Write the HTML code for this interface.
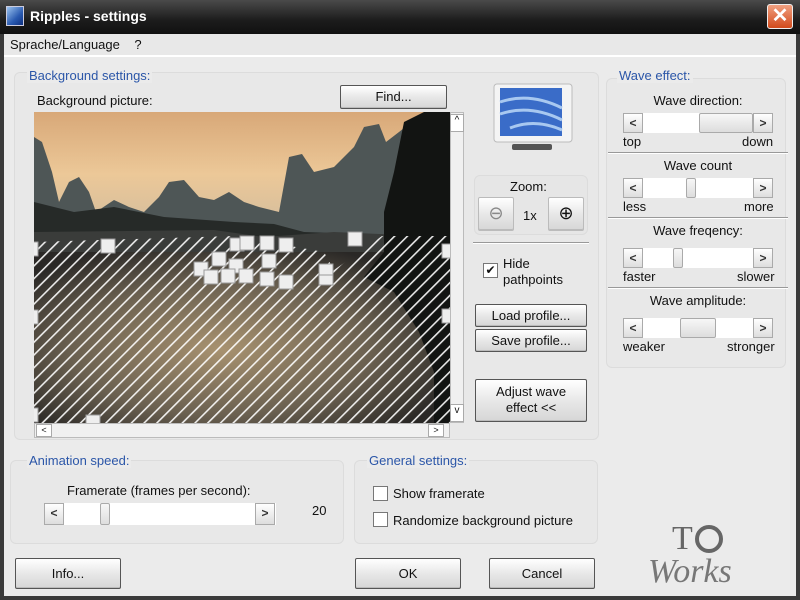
<!DOCTYPE html>
<html><head><meta charset="utf-8"><style>
*{box-sizing:border-box;margin:0;padding:0}
body{width:800px;height:600px;overflow:hidden;background:#3a3a3a;font-family:"Liberation Sans",sans-serif;font-size:13px;color:#111;position:relative}
.a{position:absolute}
.title{left:0;top:0;width:800px;height:34px;background:linear-gradient(#4a4a4a,#1c1c1c 60%,#111)}
.body{left:4px;top:34px;width:792px;height:562px;background:#ebebeb}
.grp{position:absolute;border:1px solid #dcdcdc;border-radius:6px;background:#e8e8e8}
.lbl{position:absolute;color:#2b56a8;font-size:13px;background:#ebebeb;padding:0 2px}
.btn{position:absolute;border:1px solid #555;border-radius:2px;background:linear-gradient(#fff,#e8e8e8 50%,#d6d6d6);text-align:center;font-size:13px;box-shadow:inset 0 -1px 0 #bbb}
.sb{position:absolute;background:#fff;height:20px}
.arr{position:absolute;width:20px;height:20px;border:1px solid #aaa;background:linear-gradient(#fff,#ddd);font-size:12px;text-align:center;line-height:18px;color:#333;font-weight:bold}
.th{position:absolute;top:0;height:20px;border:1px solid #aaa;background:linear-gradient(#f7f7f7,#ddd);border-radius:2px}
.cb{position:absolute;width:15px;height:15px;border:1px solid #777;background:#fff}
.sep{position:absolute;height:2px;border-top:1px solid #999;border-bottom:1px solid #fff}
</style></head><body>
<div class="a title"></div>
<div class="a" style="left:6px;top:6px;width:18px;height:20px;background:linear-gradient(135deg,#9cc4f0,#2a5ab0 60%,#0d2f80);border:1px solid #ccd"></div>
<div class="a" style="left:30px;top:8px;color:#fff;font-weight:bold;font-size:14px">Ripples - settings</div>
<div class="a" style="left:767px;top:4px;width:26px;height:25px;background:linear-gradient(#f0a080,#d24a1c);border:1px solid #eee;border-radius:3px;color:#fff;font-size:20px;text-align:center;line-height:23px;font-weight:bold">✕</div>
<div class="a body"></div>
<div class="a" style="left:4px;top:34px;width:792px;height:23px;background:#e8e8e8;border-bottom:2px solid #fff"></div>
<div class="a" style="left:10px;top:37px">Sprache/Language&nbsp;&nbsp;&nbsp;&nbsp;?</div>

<div class="grp" style="left:14px;top:72px;width:585px;height:368px"></div>
<div class="lbl" style="left:27px;top:68px">Background settings:</div>
<div class="a" style="left:37px;top:93px">Background picture:</div>
<div class="btn" style="left:340px;top:85px;width:107px;height:24px;line-height:22px">Find...</div>

<div class="a" style="left:34px;top:112px;width:416px;height:311px;overflow:hidden">
<svg width="416" height="311" style="position:absolute;left:0;top:0">
<defs>
<linearGradient id="sky" x1="0" y1="0" x2="0" y2="1"><stop offset="0" stop-color="#d8a878"/><stop offset=".2" stop-color="#ecc898"/><stop offset=".45" stop-color="#c8b8a0"/><stop offset=".7" stop-color="#8a8c88"/></linearGradient>
<radialGradient id="wat" cx=".45" cy=".6" r=".6"><stop offset="0" stop-color="#a89270"/><stop offset=".6" stop-color="#6a6050"/><stop offset="1" stop-color="#2a2826"/></radialGradient>
<pattern id="h" width="9" height="9" patternUnits="userSpaceOnUse" patternTransform="rotate(45)"><rect width="1.6" height="9" fill="#fff" opacity=".9"/></pattern>
</defs>
<rect width="416" height="311" fill="url(#sky)"/>
<path d="M0 25 L8 30 L18 60 L25 90 L35 70 L45 65 L55 80 L62 100 L80 88 L95 95 L110 100 L125 85 L135 70 L150 68 L165 85 L180 88 L195 80 L210 90 L225 95 L245 100 L255 45 L268 42 L280 60 L300 55 L320 35 L330 15 L345 12 L352 30 L365 20 L380 8 L416 0 L416 160 L0 160Z" fill="#4e5656"/>
<path d="M0 90 L40 100 L80 95 L130 105 L200 110 L240 112 L270 120 L416 125 L416 130 L0 130Z" fill="#262a28"/>
<rect x="0" y="126" width="416" height="185" fill="url(#wat)"/>
<path d="M0 120 L180 118 L230 125 L300 120 L416 125 L416 140 L0 140Z" fill="#3a3c3a"/>
<path d="M370 10 L390 0 L416 0 L416 311 L400 311 L400 260 L385 220 L360 180 L330 165 L350 140 L350 100 L360 60Z" fill="#121412"/>
<path d="M0 130 L200 124 L290 140 L300 158 L348 124 L416 124 L416 311 L0 311Z" fill="url(#h)"/>
<g fill="#eee" stroke="#999" stroke-width="1">
<rect x="67" y="127" width="14" height="14"/><rect x="314" y="120" width="14" height="14"/>
<rect x="196" y="126" width="14" height="13"/><rect x="206" y="124" width="14" height="14"/><rect x="226" y="124" width="14" height="14"/><rect x="245" y="126" width="14" height="14"/>
<rect x="178" y="140" width="14" height="14"/><rect x="195" y="147" width="14" height="14"/><rect x="160" y="150" width="14" height="14"/><rect x="170" y="158" width="14" height="14"/><rect x="187" y="157" width="14" height="14"/><rect x="205" y="157" width="14" height="14"/><rect x="226" y="160" width="14" height="14"/><rect x="245" y="163" width="14" height="14"/><rect x="228" y="142" width="14" height="14"/><rect x="285" y="152" width="14" height="14"/><rect x="285" y="163" width="14" height="10"/>
<rect x="-6" y="130" width="10" height="14"/><rect x="-6" y="198" width="10" height="14"/><rect x="-6" y="296" width="10" height="14"/><rect x="408" y="132" width="10" height="14"/><rect x="408" y="197" width="10" height="14"/><rect x="52" y="303" width="14" height="12"/>
</g></svg></div>
<div class="a" style="left:450px;top:112px;width:14px;height:311px;background:#f0f0f0;border:1px solid #bbb"></div>
<div class="a" style="left:450px;top:114px;width:14px;height:18px;border:1px solid #aaa;background:#fff;font-size:10px;text-align:center">^</div>
<div class="a" style="left:450px;top:404px;width:14px;height:18px;border:1px solid #aaa;background:#fff;font-size:10px;text-align:center">v</div>
<div class="a" style="left:34px;top:423px;width:416px;height:15px;background:#f0f0f0;border:1px solid #bbb"></div>
<div class="a" style="left:36px;top:424px;width:16px;height:13px;border:1px solid #aaa;background:#fff;font-size:9px;text-align:center">&lt;</div>
<div class="a" style="left:428px;top:424px;width:16px;height:13px;border:1px solid #aaa;background:#fff;font-size:9px;text-align:center">&gt;</div>

<svg class="a" style="left:490px;top:82px" width="86" height="72">
<rect x="4" y="2" width="78" height="58" rx="3" fill="#f4f4f4" stroke="#bbb"/>
<rect x="10" y="6" width="62" height="48" fill="#3a6cc8"/>
<path d="M10 20 Q40 10 72 26 M10 32 Q40 22 72 38 M20 46 Q45 36 72 48" stroke="#a8c8f0" stroke-width="3" fill="none"/>
<rect x="22" y="62" width="40" height="6" rx="2" fill="#555"/></svg>

<div class="grp" style="left:474px;top:175px;width:114px;height:60px;background:#e6e6e6"></div>
<div class="a" style="left:510px;top:179px">Zoom:</div>
<div class="btn" style="left:478px;top:197px;width:36px;height:34px;border-color:#bbb;font-size:18px;line-height:30px;color:#888">⊖</div>
<div class="a" style="left:523px;top:208px">1x</div>
<div class="btn" style="left:548px;top:197px;width:36px;height:34px;border-color:#bbb;font-size:18px;line-height:30px">⊕</div>
<div class="sep" style="left:473px;top:242px;width:116px"></div>
<div class="cb" style="left:483px;top:263px;font-size:12px;line-height:13px;text-align:center">✔</div>
<div class="a" style="left:503px;top:256px;line-height:16px">Hide<br>pathpoints</div>
<div class="btn" style="left:475px;top:304px;width:112px;height:23px;line-height:21px">Load profile...</div>
<div class="btn" style="left:475px;top:329px;width:112px;height:23px;line-height:21px">Save profile...</div>
<div class="btn" style="left:475px;top:379px;width:112px;height:43px;line-height:16px;padding-top:4px">Adjust wave<br>effect &lt;&lt;</div>

<div class="grp" style="left:606px;top:78px;width:180px;height:290px"></div>
<div class="lbl" style="left:617px;top:68px">Wave effect:</div>
<div class="a" style="left:610px;top:93px;width:176px;text-align:center">Wave direction:</div>
<div class="sb" style="left:623px;top:113px;width:150px"><div class="arr" style="left:0;top:0">&lt;</div><div class="th" style="left:76px;width:54px"></div><div class="arr" style="left:130px;top:0">&gt;</div></div>
<div class="a" style="left:623px;top:134px">top</div><div class="a" style="left:742px;top:134px">down</div>
<div class="sep" style="left:608px;top:152px;width:180px"></div>
<div class="a" style="left:610px;top:158px;width:176px;text-align:center">Wave count</div>
<div class="sb" style="left:623px;top:178px;width:150px"><div class="arr" style="left:0;top:0">&lt;</div><div class="th" style="left:63px;width:10px"></div><div class="arr" style="left:130px;top:0">&gt;</div></div>
<div class="a" style="left:623px;top:199px">less</div><div class="a" style="left:744px;top:199px">more</div>
<div class="sep" style="left:608px;top:217px;width:180px"></div>
<div class="a" style="left:610px;top:223px;width:176px;text-align:center">Wave freqency:</div>
<div class="sb" style="left:623px;top:248px;width:150px"><div class="arr" style="left:0;top:0">&lt;</div><div class="th" style="left:50px;width:10px"></div><div class="arr" style="left:130px;top:0">&gt;</div></div>
<div class="a" style="left:623px;top:269px">faster</div><div class="a" style="left:737px;top:269px">slower</div>
<div class="sep" style="left:608px;top:287px;width:180px"></div>
<div class="a" style="left:610px;top:293px;width:176px;text-align:center">Wave amplitude:</div>
<div class="sb" style="left:623px;top:318px;width:150px"><div class="arr" style="left:0;top:0">&lt;</div><div class="th" style="left:57px;width:36px"></div><div class="arr" style="left:130px;top:0">&gt;</div></div>
<div class="a" style="left:623px;top:339px">weaker</div><div class="a" style="left:727px;top:339px">stronger</div>

<div class="grp" style="left:10px;top:460px;width:334px;height:84px"></div>
<div class="lbl" style="left:27px;top:453px">Animation speed:</div>
<div class="a" style="left:67px;top:483px">Framerate (frames per second):</div>
<div class="sb" style="left:44px;top:503px;width:232px;height:22px"><div class="arr" style="left:0;top:0;height:22px">&lt;</div><div class="th" style="left:56px;width:10px;height:22px"></div><div class="arr" style="left:211px;top:0;height:22px">&gt;</div></div>
<div class="a" style="left:312px;top:503px">20</div>

<div class="grp" style="left:354px;top:460px;width:244px;height:84px"></div>
<div class="lbl" style="left:367px;top:453px">General settings:</div>
<div class="cb" style="left:373px;top:486px"></div><div class="a" style="left:393px;top:486px">Show framerate</div>
<div class="cb" style="left:373px;top:512px"></div><div class="a" style="left:393px;top:513px">Randomize background picture</div>

<div class="btn" style="left:15px;top:558px;width:106px;height:31px;line-height:29px">Info...</div>
<div class="btn" style="left:355px;top:558px;width:106px;height:31px;line-height:29px">OK</div>
<div class="btn" style="left:489px;top:558px;width:106px;height:31px;line-height:29px">Cancel</div>
<div class="a" style="left:672px;top:520px;font-size:34px;color:#666;font-family:'Liberation Serif',serif">T</div>
<div class="a" style="left:695px;top:525px;width:28px;height:28px;border-radius:50%;border:4px solid #666"></div>
<div class="a" style="left:648px;top:553px;font-size:34px;color:#777;font-style:italic;font-family:'Liberation Serif',serif">Works</div>
</body></html>
